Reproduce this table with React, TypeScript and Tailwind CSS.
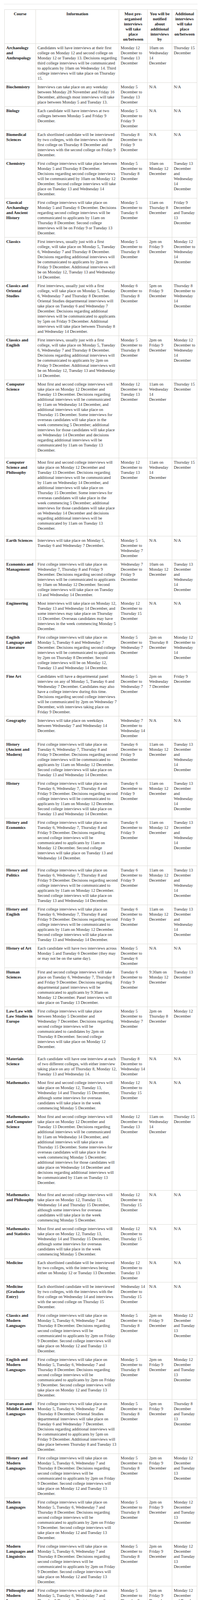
import React from "react"

type Row = {
  course: string
  info: string
  most: string
  notified: string
  additional: string
  // some entries are wrapped in a <p> on the source page: narrower measure, extra space below
  para?: boolean
}

const classicsText =
  "First interviews, usually just with a first college, will take place on Monday 5, Tuesday 6, Wednesday 7 and Thursday 8 December. Decisions regarding additional interviews will be communicated to applicants by 2pm on Friday 9 December. Additional interviews will be on Monday 12, Tuesday 13 and Wednesday 14 December."
const csText =
  "Most first and second college interviews will take place on Monday 12 December and Tuesday 13 December. Decisions regarding additional interviews will be communicated by 11am on Wednesday 14 December, and additional interviews will take place on Thursday 15 December. Some interviews for overseas candidates will take place in the week commencing 5 December; additional interviews for those candidates will take place on Wednesday 14 December and decisions regarding additional interviews will be communicated by 11am on Tuesday 13 December."
const historyText =
  "First college interviews will take place on Tuesday 6, Wednesday 7, Thursday 8 and Friday 9 December. Decisions regarding second college interviews will be communicated to applicants by 11am on Monday 12 December. Second college interviews will take place on Tuesday 13 and Wednesday 14 December."
const mathsText =
  "Most first and second college interviews will take place on Monday 12, Tuesday 13, Wednesday 14 and Thursday 15 December, although some interviews for overseas candidates will take place in the week commencing Monday 5 December."
const mlText =
  "First college interviews will take place on Monday 5, Tuesday 6, Wednesday 7 and Thursday 8 December. Decisions regarding second college interviews will be communicated to applicants by 2pm on Friday 9 December. Second college interviews will take place on Monday 12 and Tuesday 13 December."
const physicsText =
  "First college interviews will take place on Wednesday 7, Thursday 8, Friday 9 and Monday 12 December. Second college interviews will take place on Tuesday 13 and Wednesday 14 December."
const psychText =
  "First and second college interviews will take place on Monday 12, Tuesday 13 and Wednesday 14 December."
const theologyText =
  "First and second college interviews will take place Monday 5, Tuesday 6, Wednesday 7 and Thursday 8 December."

const history = {
  info: historyText,
  most: "Tuesday 6 December to Friday 9 December",
  notified: "11am on Monday 12 December",
  additional: "Tuesday 13 December and Wednesday 14 December",
}
const ml = {
  info: mlText,
  most: "Monday 5 December to Thursday 8 December",
  notified: "2pm on Friday 9 December",
  additional: "Monday 12 December and Tuesday 13 December",
}
const na = { notified: "N/A", additional: "N/A" }

const rows: Row[] = [
  { course: "Archaeology and Anthropology", info: "Candidates will have interviews at their first college on Monday 12 and second college on Monday 12 or Tuesday 13. Decisions regarding third college interviews will be communicated to applicants by 10am on Wednesday 14. Third college interviews will take place on Thursday 15.", most: "Monday 12 December to Tuesday 13 December", notified: "10am on Wednesday 14 December", additional: "Thursday 15 December" },
  { course: "Biochemistry", info: "Interviews can take place on any weekday between Monday 28 November and Friday 16 December, although most interviews will take place between Monday 5 and Tuesday 13.", most: "Monday 5 December to Tuesday 13 December", ...na },
  { course: "Biology", info: "Each candidate will have interviews at two colleges between Monday 5 and Friday 9 December.", most: "Monday 5 December to Friday 9 December", ...na },
  { course: "Biomedical Sciences", info: "Each shortlisted candidate will be interviewed by two colleges, with the interviews with the first college on Thursday 8 December and interviews with the second college on Friday 9 December.", most: "Thursday 8 December to Friday 9 December", ...na },
  { course: "Chemistry", info: "First college interviews will take place between Monday 5 and Thursday 8 December. Decisions regarding second college interviews will be communicated by 10am on Monday 12 December. Second college interviews will take place on Tuesday 13 and Wednesday 14 December.", most: "Monday 5 December to Thursday 8 December", notified: "10am on Monday 12 December", additional: "Tuesday 13 December and Wednesday 14 December" },
  { course: "Classical Archaeology and Ancient History", info: "First college interviews will take place on Monday 5 and Tuesday 6 December. Decisions regarding second college interviews will be communicated to applicants by 11am on Thursday 8 December. Second college interviews will be on Friday 9 or Tuesday 13 December.", most: "Monday 5 December to Tuesday 6 December", notified: "11am on Thursday 8 December", additional: "Friday 9 December and Tuesday 13 December" },
  { course: "Classics", info: classicsText, most: "Monday 5 December to Thursday 8 December", notified: "2pm on Friday 9 December", additional: "Monday 12 December to Wednesday 14 December" },
  { course: "Classics and Oriental Studies", info: "First interviews, usually just with a first college, will take place on Monday 5, Tuesday 6, Wednesday 7 and Thursday 8 December. Oriental Studies departmental interviews will take place on Tuesday 6 and Wednesday 7 December. Decisions regarding additional interviews will be communicated to applicants by 5pm on Friday 9 December. Additional interviews will take place between Thursday 8 and Wednesday 14 December.", most: "Monday 6 December to Thursday 8 December", notified: "5pm on Friday 9 December", additional: "Thursday 8 December to Wednesday 14 December" },
  { course: "Classics and English", info: classicsText, most: "Monday 5 December to Thursday 8 December", notified: "2pm on Friday 9 December", additional: "Monday 12 December to Wednesday 14 December" },
  { course: "Computer Science", info: csText, most: "Monday 12 December to Tuesday 13 December", notified: "11am on Wednesday 14 December", additional: "Thursday 15 December", para: true },
  { course: "Computer Science and Philosophy", info: csText, most: "Monday 12 December to Tuesday 13 December", notified: "11am on Wednesday 14 December", additional: "Thursday 15 December", para: true },
  { course: "Earth Sciences", info: "Interviews will take place on Monday 5, Tuesday 6 and Wednesday 7 December.", most: "Monday 5 December to Wednesday 7 December", ...na },
  { course: "Economics and Management", info: "First college interviews will take place on Wednesday 7, Thursday 8 and Friday 9 December. Decisions regarding second college interviews will be communicated to applicants by 10am on Monday 12 December. Second college interviews will take place on Tuesday 13 and Wednesday 14 December.", most: "Wednesday 7 December to Friday 9 December", notified: "10am on Monday 12 December", additional: "Tuesday 13 December and Wednesday 14 December" },
  { course: "Engineering", info: "Most interviews will take place on Monday 12, Tuesday 13 and Wednesday 14 December, and some interviews may take place on Thursday 15 December. Overseas candidates may have interviews in the week commencing Monday 5 December.", most: "Monday 12 December to Thursday 15 December", ...na },
  { course: "English Language and Literature", info: "First college interviews will take place on Monday 5, Tuesday 6 and Wednesday 7 December. Decisions regarding second college interviews will be communicated to applicants by 2pm on Thursday 8 December. Second college interviews will be on Monday 12, Tuesday 13 and Wednesday 14 December.", most: "Monday 5 December to Wednesday 7 December", notified: "2pm on Thursday 8 December", additional: "Monday 12 December to Wednesday 14 December" },
  { course: "Fine Art", info: "Candidates will have a departmental panel interview on any of Monday 5, Tuesday 6 and Wednesday 7 December. Candidates may also have a college interview during this time. Decisions regarding second college interviews will be communicated by 2pm on Wednesday 7 December, with interviews taking place on Friday 9 December.", most: "Monday 5 December to Wednesday 7 December", notified: "2pm on Wednesday 7 December", additional: "Friday 9 December" },
  { course: "Geography", info: "Interviews will take place on weekdays between Wednesday 7 and Wednesday 14 December.", most: "Wednesday 7 December to Wednesday 14 December", ...na },
  { course: "History (Ancient and Modern)", ...history },
  { course: "History", ...history },
  { course: "History and Economics", ...history, para: true },
  { course: "History and Politics", ...history },
  { course: "History and English", ...history },
  { course: "History of Art", info: "Each candidate will have two interviews across Monday 5 and Tuesday 6 December (they may or may not be on the same day).", most: "Monday 5 December to Tuesday 6 December", ...na },
  { course: "Human Sciences", info: "First and second college interviews will take place on Tuesday 6, Wednesday 7, Thursday 8 and Friday 9 December. Decisions regarding departmental panel interviews will be communicated to applicants by 9:30am on Monday 12 December. Panel interviews will take place on Tuesday 13 December.", most: "Tuesday 6 December to Friday 9 December", notified: "9:30am on Monday 12 December", additional: "Tuesday 13 December" },
  { course: "Law/Law with Law Studies in Europe", info: "First college interviews will take place between Monday 5 December and Wednesday 7 December. Decisions regarding second college interviews will be communicated to candidates by 2pm on Thursday 8 December. Second college interviews will take place on Monday 12 December.", most: "Monday 5 December to Wednesday 7 December", notified: "2pm on Thursday 8 December", additional: "Monday 12 December", para: true },
  { course: "Materials Science", info: "Each candidate will have one interview at each of two different colleges, with either interview taking place on any of Thursday 8, Monday 12, Tuesday 13 and Wednesday 14.", most: "Thursday 8 December to Wednesday 14 December", ...na },
  { course: "Mathematics", info: mathsText, most: "Monday 12 December to Thursday 15 December", ...na },
  { course: "Mathematics and Computer Science", info: "Most first and second college interviews will take place on Monday 12 December and Tuesday 13 December. Decisions regarding additional interviews will be communicated by 11am on Wednesday 14 December, and additional interviews will take place on Thursday 15 December. Some interviews for overseas candidates will take place in the week commencing Monday 5 December; additional interviews for those candidates will take place on Wednesday 14 December and decisions regarding additional interviews will be communicated by 11am on Tuesday 13 December.", most: "Monday 12 December to Tuesday 13 December", notified: "11am on Wednesday 14 December", additional: "Thursday 15 December", para: true },
  { course: "Mathematics and Philosophy", info: mathsText, most: "Monday 12 December to Thursday 15 December", ...na },
  { course: "Mathematics and Statistics", info: mathsText, most: "Monday 12 December to Thursday 15 December", ...na },
  { course: "Medicine", info: "Each shortlisted candidate will be interviewed by two colleges, with the interviews being either on Monday 12 or Tuesday 13 December.", most: "Monday 12 December to Tuesday 13 December", ...na },
  { course: "Medicine (Graduate Entry)", info: "Each shortlisted candidate will be interviewed by two colleges, with the interviews with the first college on Wednesday 14 and interviews with the second college on Thursday 15 December.", most: "Wednesday 14 December to Thursday 15 December", ...na },
  { course: "Classics and Modern Languages", ...ml },
  { course: "English and Modern Languages", ...ml },
  { course: "European and Middle Eastern Languages", info: "First college interviews will take place on Monday 5, Tuesday 6, Wednesday 7 and Thursday 8 December. Oriental Studies departmental interviews will take place on Tuesday 6 and Wednesday 7 December. Decisions regarding additional interviews will be communicated to applicants by 5pm on Friday 9 December. Additional interviews will take place between Thursday 8 and Tuesday 13 December.", most: "Monday 5 December to Thursday 8 December", notified: "5pm on Friday 9 December", additional: "Thursday 8 December and Tuesday 13 December" },
  { course: "History and Modern Languages", ...ml },
  { course: "Modern Languages", ...ml },
  { course: "Modern Languages and Linguistics", ...ml },
  { course: "Philosophy and Modern Languages", ...ml },
  { course: "Music", info: "First and second college interviews will take place on Monday 5, Tuesday 6 and Wednesday 7 December. Decisions regarding departmental interviews will be communicated to applicants by 2pm on Thursday 8 December. Departmental interviews will take place on Monday 12 December.", most: "Monday 5 December to Wednesday 7 December", notified: "2pm on Thursday 8 December", additional: "Monday 12 December" },
  { course: "Oriental Studies", info: "Departmental interviews will take place on Tuesday 6 and Wednesday 7 December. First college interviews will take place between Wednesday 7 and Friday 9 December. Decisions regarding additional interviews will be communicated to applicants by 5pm on Friday 9 December. Additional interviews will take place between Thursday 8 and Tuesday 14 December.", most: "Tuesday 6 December to Wednesday 7 December", notified: "5pm on Friday 9 December", additional: "Thursday 8 December and Tuesday 14 December" },
  { course: "Philosophy, Politics and Economics", info: "Most first college interviews will take place on Monday 5 and Tuesday 6 December, although some interviews for overseas candidates will take place in the week commencing Monday 29 November, and some interviews may take place on the morning of Wednesday 7 December. Decisions regarding second college interviews will be communicated to applicants by 11am on Thursday 8 December. Second college interviews will take place on Friday 9, Monday 12, Tuesday 13 and Wednesday 14 December.", most: "Monday 5 December to Tuesday 6 December", notified: "11am on Thursday 8 December", additional: "Friday 9 December to Wednesday 14 December" },
  { course: "Physics", info: physicsText, most: "Wednesday 7 December to Wednesday 14 December", ...na },
  { course: "Physics and Philosophy", info: physicsText, most: "Wednesday 7 December to Wednesday 14 December", ...na },
  { course: "Psychology (Experimental)", info: psychText, most: "Monday 12 December to Wednesday 14 December", ...na },
  { course: "Psychology, Philosophy and Linguistics", info: psychText, most: "Monday 12 December to Wednesday 14 December", ...na },
  { course: "Philosophy and Theology", info: theologyText, most: "Monday 5 December to Thursday 8 December", ...na },
  { course: "Religion and Oriental Studies", info: "First and second college interviews will take place between Monday 5 and Friday 9 December. Oriental Studies departmental interviews will take place on Tuesday 6 and Wednesday 7 December. Decisions regarding additional interviews will be communicated to applicants by 5pm on Friday 9 December. Additional interviews will take place between Thursday 8 and Tuesday 14 December.", most: "Monday 5 December to Friday 9 December", ...na },
  { course: "Theology and Religion", info: theologyText, most: "Monday 5 December to Thursday 8 December", ...na },
]

const cell = "border border-[#dcdbd6] pl-[4px] pt-[4px] align-top"
const th = `${cell} pr-[4px] pb-[4px] text-center font-bold text-[#222]`
const td = `${cell} text-left`

export default function App() {
  return (
    <div className="bg-white pt-[10px] pl-[10px] pb-[18px] font-['Liberation_Serif','Times_New_Roman',serif] text-[10.7px] leading-[13px] text-[#333]">
      <div className="w-[496px] border-t border-[#e2e2e2]" />
      <table className="mt-[13px] ml-[1px] w-[493px] table-fixed border-collapse">
        <colgroup>
          <col className="w-[80px]" />
          <col className="w-[213px]" />
          <col className="w-[73px]" />
          <col className="w-[63px]" />
          <col className="w-[64px]" />
        </colgroup>
        <thead>
          <tr>
            <th className={th}>Course</th>
            <th className={th}>Information</th>
            <th className={th}>Most pre-organised interviews will take place on/between</th>
            <th className={th}>You will be notified about additional interviews by</th>
            <th className={th}>Additional interviews will take place on/between</th>
          </tr>
        </thead>
        <tbody>
          {rows.map((r) => (
            <tr key={r.course}>
              <td className={`${td} pr-[4px] font-bold text-[#222] ${r.para ? "pb-[13px]" : "pb-[4px]"}`}>{r.course}</td>
              <td className={`${td} pr-[2px] ${r.para ? "pb-[13px]" : "pb-[4px]"}`}>
                {r.para ? <p className="pr-[8px]">{r.info}</p> : r.info}
              </td>
              <td className={`${td} pr-[4px] pb-[4px]`}>{r.most}</td>
              <td className={`${td} pr-[4px] pb-[4px]`}>{r.notified}</td>
              <td className={`${td} pr-[4px] pb-[4px]`}>{r.additional}</td>
            </tr>
          ))}
        </tbody>
      </table>
    </div>
  )
}
